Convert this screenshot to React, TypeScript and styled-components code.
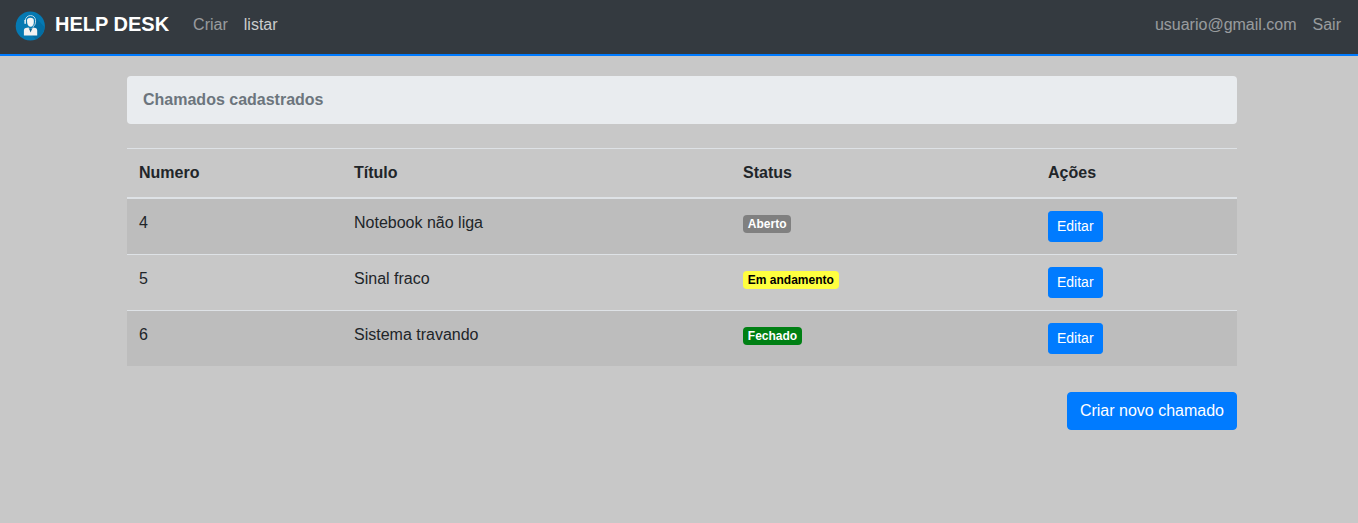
import React from "react";
import styled, { createGlobalStyle } from "styled-components";

const GlobalStyle = createGlobalStyle`
  *, *::before, *::after { box-sizing: border-box; }
  body {
    margin: 0;
    background: #c8c8c8;
    color: #212529;
    font-family: "Liberation Sans", Arial, sans-serif;
    font-size: 16px;
    line-height: 1.5;
  }
`;

const Navbar = styled.header`
  display: flex;
  align-items: center;
  height: 56px;
  padding: 0 17px 5px 15px;
  background: #343a40;
  border-bottom: 2px solid #007bff;
`;

const Brand = styled.a`
  display: flex;
  align-items: flex-start;
  gap: 10px;
  margin-right: 24px;
  color: #fff;
  font-size: 20px;
  font-weight: 700;
  line-height: 32px;
`;

const Logo = styled.svg`
  display: block;
  width: 30px;
  height: 30px;
  margin-top: 3px;
`;

const Nav = styled.nav<{ $end?: boolean }>`
  display: flex;
  gap: 16px;
  margin-left: ${(p) => (p.$end ? "auto" : "0")};
`;

const NavLink = styled.a<{ $hover?: boolean }>`
  color: rgba(255, 255, 255, ${(p) => (p.$hover ? 0.75 : 0.5)});
`;

const Container = styled.main`
  width: 1110px;
  margin: 20px 0 0 127px;
`;

const Heading = styled.div`
  padding: 12px 16px;
  margin-bottom: 24px;
  border-radius: 4px;
  background: #e9ecef;
  color: #6c757d;
  font-weight: 700;
`;

const Table = styled.table`
  width: 100%;
  table-layout: fixed;
  border-spacing: 0;
  margin-bottom: 26px;
`;

const HeadCell = styled.th<{ $width: number }>`
  width: ${(p) => p.$width}px;
  padding: 12px;
  text-align: left;
  border-top: 1px solid #dee2e6;
  border-bottom: 2px solid #dee2e6;
`;

const Row = styled.tr`
  &:nth-child(odd) { background: rgba(0, 0, 0, 0.05); }
  &:not(:first-child) > td { border-top: 1px solid #dee2e6; }
`;

const Cell = styled.td`
  padding: 12px;
  vertical-align: top;
`;

const Badge = styled.span<{ $bg: string; $color?: string }>`
  display: inline-block;
  padding: 3px 4.8px;
  border-radius: 4px;
  background: ${(p) => p.$bg};
  color: ${(p) => p.$color ?? "#fff"};
  font-size: 12px;
  font-weight: 700;
  line-height: 1;
  vertical-align: baseline;
`;

const Button = styled.button<{ $small?: boolean }>`
  display: block;
  border: 1px solid #007bff;
  background: #007bff;
  color: #fff;
  font-family: inherit;
  font-size: ${(p) => (p.$small ? "14px" : "16px")};
  line-height: 1.5;
  padding: ${(p) => (p.$small ? "4px 8px" : "6px 12px")};
  border-radius: ${(p) => (p.$small ? "3.2px" : "4px")};
`;

const Actions = styled.div`
  display: flex;
  justify-content: flex-end;
`;

const columns = [
  { label: "Numero", width: 215 },
  { label: "Título", width: 389 },
  { label: "Status", width: 305 },
  { label: "Ações", width: 201 },
];

const tickets = [
  { id: 4, title: "Notebook não liga", status: "Aberto", bg: "#808080", color: "#fff" },
  { id: 5, title: "Sinal fraco", status: "Em andamento", bg: "#ffff40", color: "#000" },
  { id: 6, title: "Sistema travando", status: "Fechado", bg: "#008014", color: "#fff" },
];

function HelpDeskLogo() {
  return (
    <Logo viewBox="0 0 30 30" aria-hidden="true">
      <circle cx="15.3" cy="15" r="14.6" fill="#0579b2" />
      <path d="M21 7 L29.4 16 A14.6 14.6 0 0 1 21 28.4 L17 24.6 Z" fill="#036da3" />
      <path
        d="M10.2 9.8 C10.6 2.8 20.6 2.8 20.6 9.8 C20.6 12.8 19.6 14.8 17.8 15.8"
        fill="none"
        stroke="#cfe4ee"
        strokeWidth="0.9"
      />
      <rect x="9.4" y="8.8" width="1.5" height="4.2" rx="0.7" fill="#e4f0f6" />
      <path d="M12 9.4 Q12 6.8 15.4 6.8 Q18.9 6.8 18.9 10 Q18.9 15.8 15.4 15.8 Q12 15.4 12 9.4 Z" fill="#f4f5f5" />
      <path d="M8.9 24.6 V19.2 Q8.9 17.4 10.6 17 L13.4 16.4 L15.6 18 L18 16.4 L20.6 17 Q22.2 17.4 22.2 19.2 V24.6 Z" fill="#f1f1f1" />
      <path d="M13.6 17 L15.6 18 L17.6 17 L16.5 19.2 L15.6 21.4 L14.7 19.2 Z" fill="#0c638e" />
    </Logo>
  );
}

export default function App() {
  return (
    <>
      <GlobalStyle />
      <Navbar>
        <Brand>
          <HelpDeskLogo />
          HELP DESK
        </Brand>
        <Nav>
          <NavLink>Criar</NavLink>
          <NavLink $hover>listar</NavLink>
        </Nav>
        <Nav $end>
          <NavLink>usuario@gmail.com</NavLink>
          <NavLink>Sair</NavLink>
        </Nav>
      </Navbar>
      <Container>
        <Heading>Chamados cadastrados</Heading>
        <Table>
          <thead>
            <tr>
              {columns.map((c) => (
                <HeadCell key={c.label} $width={c.width}>{c.label}</HeadCell>
              ))}
            </tr>
          </thead>
          <tbody>
            {tickets.map((t) => (
              <Row key={t.id}>
                <Cell>{t.id}</Cell>
                <Cell>{t.title}</Cell>
                <Cell><Badge $bg={t.bg} $color={t.color}>{t.status}</Badge></Cell>
                <Cell><Button $small>Editar</Button></Cell>
              </Row>
            ))}
          </tbody>
        </Table>
        <Actions>
          <Button>Criar novo chamado</Button>
        </Actions>
      </Container>
    </>
  );
}
